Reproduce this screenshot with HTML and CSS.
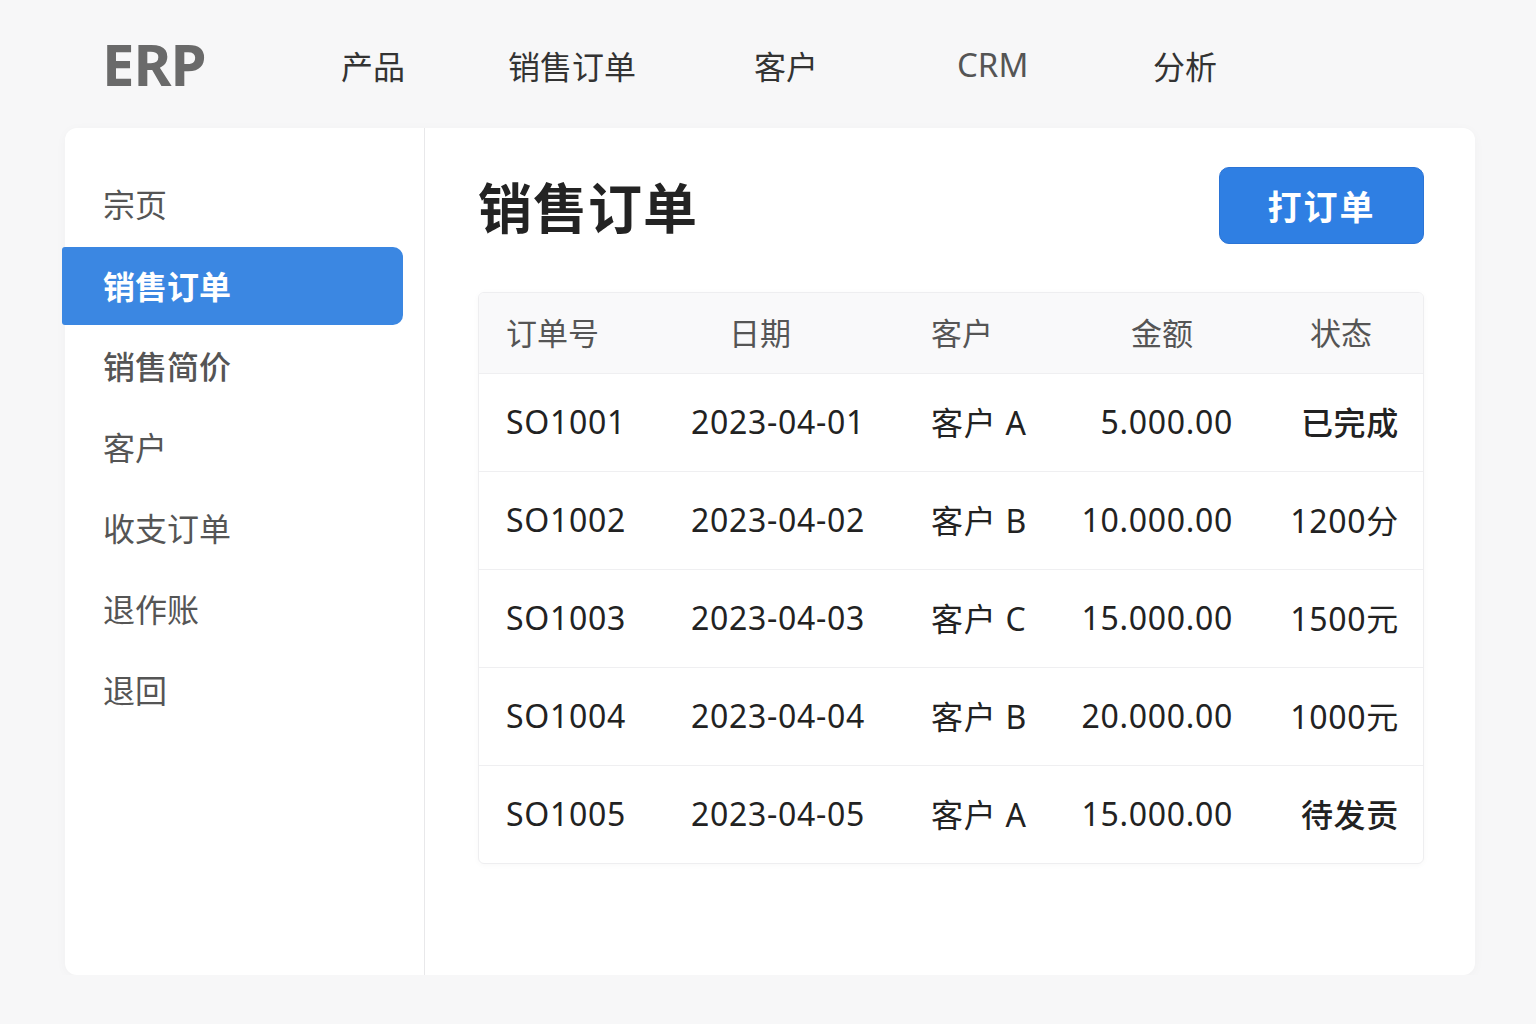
FILE: index.html
```html
<!DOCTYPE html>
<html lang="zh">
<head>
  <meta charset="UTF-8">
  <title>ERP 销售订单</title>
  <link rel="stylesheet" href="styles.css">
</head>
<body>

  <!-- 顶部导航 -->
  <header class="topbar">
    <div class="logo">ERP</div>
    <nav class="topnav">
      <a>产品</a>
      <a>销售订单</a>
      <a>客户</a>
      <a class="latin">CRM</a>
      <a>分析</a>
    </nav>
  </header>

  <div class="card">
    <aside class="sidebar">
      <ul>
        <li>宗页</li>
        <li class="active">销售订单</li>
        <li class="strong">销售简价</li>
        <li>客户</li>
        <li>收支订单</li>
        <li>退作账</li>
        <li>退回</li>
      </ul>
    </aside>

    <main class="content">
      <div class="title-row">
        <h1>销售订单</h1>
        <button class="btn">打订单</button>
      </div>

      <div class="table">
        <div class="row head">
          <div class="c1">订单号</div>
          <div class="c2">日期</div>
          <div class="c3">客户</div>
          <div class="c4">金额</div>
          <div class="c5">状态</div>
        </div>
        <div class="row">
          <div class="c1">SO1001</div>
          <div class="c2">2023-04-01</div>
          <div class="c3">客户 A</div>
          <div class="c4">5.000.00</div>
          <div class="c5 done">已完成</div>
        </div>
        <div class="row">
          <div class="c1">SO1002</div>
          <div class="c2">2023-04-02</div>
          <div class="c3">客户 B</div>
          <div class="c4">10.000.00</div>
          <div class="c5">1200分</div>
        </div>
        <div class="row">
          <div class="c1">SO1003</div>
          <div class="c2">2023-04-03</div>
          <div class="c3">客户 C</div>
          <div class="c4">15.000.00</div>
          <div class="c5">1500元</div>
        </div>
        <div class="row">
          <div class="c1">SO1004</div>
          <div class="c2">2023-04-04</div>
          <div class="c3">客户 B</div>
          <div class="c4">20.000.00</div>
          <div class="c5">1000元</div>
        </div>
        <div class="row">
          <div class="c1">SO1005</div>
          <div class="c2">2023-04-05</div>
          <div class="c3">客户 A</div>
          <div class="c4">15.000.00</div>
          <div class="c5 done">待发贡</div>
        </div>
      </div>
    </main>
  </div>

</body>
</html>
```

FILE: styles.css
```css
body {
  margin: 0;
  background: #f7f7f8;
  font-family: "Noto Sans", "Noto Sans CJK SC", sans-serif;
  color: #222;
}

/* 顶部导航 */
.topbar {
  height: 128px;
  display: flex;
  align-items: center;
  padding-left: 102px;
  box-sizing: border-box;
}

.logo {
  width: 239px;
  font-size: 58px;
  font-weight: 700;
  color: #6a6a6a;
  letter-spacing: -1px;
  margin-top: -2px;
}

.topnav {
  display: grid;
  grid-template-columns: 167px 246px 203px 196px auto;
  font-size: 32px;
  color: #333;
  margin-top: 2px;
}

.topnav .latin {
  color: #555;
  font-size: 33px;
}

/* 白色主卡片 */
.card {
  margin-left: 65px;
  width: 1410px;
  height: 847px;
  background: #fff;
  border-radius: 12px;
  box-shadow: 0 2px 12px rgba(0, 0, 0, 0.03);
  display: flex;
}

.sidebar {
  width: 360px;
  border-right: 1px solid #e8e8ea;
  padding-top: 37px;
  box-sizing: border-box;
}

.sidebar ul {
  list-style: none;
  margin: 0;
  padding: 0;
}

.sidebar li {
  height: 81px;
  display: flex;
  align-items: center;
  padding-left: 38px;
  padding-bottom: 6px;
  box-sizing: border-box;
  font-size: 32px;
  color: #555;
}

.sidebar li.strong {
  font-weight: 500;
}

.sidebar li.active {
  margin-left: -3px;
  width: 341px;
  height: 78px;
  margin-top: 1px;
  margin-bottom: 2px;
  padding-left: 41px;
  padding-bottom: 2px;
  background: #3b87e2;
  border-radius: 3px 10px 10px 3px;
  color: #fff;
  font-weight: 700;
}

/* 右侧内容 */
.content {
  flex: 1;
  padding: 39px 51px 0 53px;
}

.title-row {
  display: flex;
  justify-content: space-between;
  align-items: center;
  height: 77px;
}

.title-row h1 {
  margin: 0;
  font-size: 54px;
  font-weight: 700;
  color: #232323;
  letter-spacing: 1px;
}

.btn {
  width: 205px;
  height: 77px;
  border: 1px solid #2b74d6;
  border-radius: 10px;
  background: #2f7fe3;
  color: #fff;
  font-family: "Noto Sans CJK SC", sans-serif;
  font-size: 34px;
  font-weight: 700;
  letter-spacing: 2px;
}

.table {
  margin-top: 48px;
  border: 1px solid #eeeef0;
  border-radius: 6px;
  overflow: hidden;
  box-shadow: 0 1px 6px rgba(0, 0, 0, 0.03);
}

.row {
  display: grid;
  grid-template-columns: 182px 245px 155px 200px 162px;
  height: 98px;
  box-sizing: border-box;
  align-items: center;
  border-top: 1px solid #efeff1;
  padding-bottom: 3px;
  font-size: 32px;
  letter-spacing: 0.7px;
  color: #222;
}

.row.head {
  height: 80px;
  border-top: none;
  background: #f9f9fa;
  color: #555;
  font-size: 31px;
  letter-spacing: 0;
  padding-bottom: 3px;
}

.c1 { padding-left: 27px; }
.c2 { padding-left: 30px; }
.c3 { padding-left: 25px; }
.c4 { text-align: right; padding-right: 28px; }
.c5 { text-align: right; padding-right: 24px; }

.head .c2 { padding-left: 68px; }
.head .c4 { text-align: left; padding-left: 70px; padding-right: 0; }
.head .c5 { text-align: left; padding-left: 49px; padding-right: 0; }

.done {
  font-weight: 500;
}
```
